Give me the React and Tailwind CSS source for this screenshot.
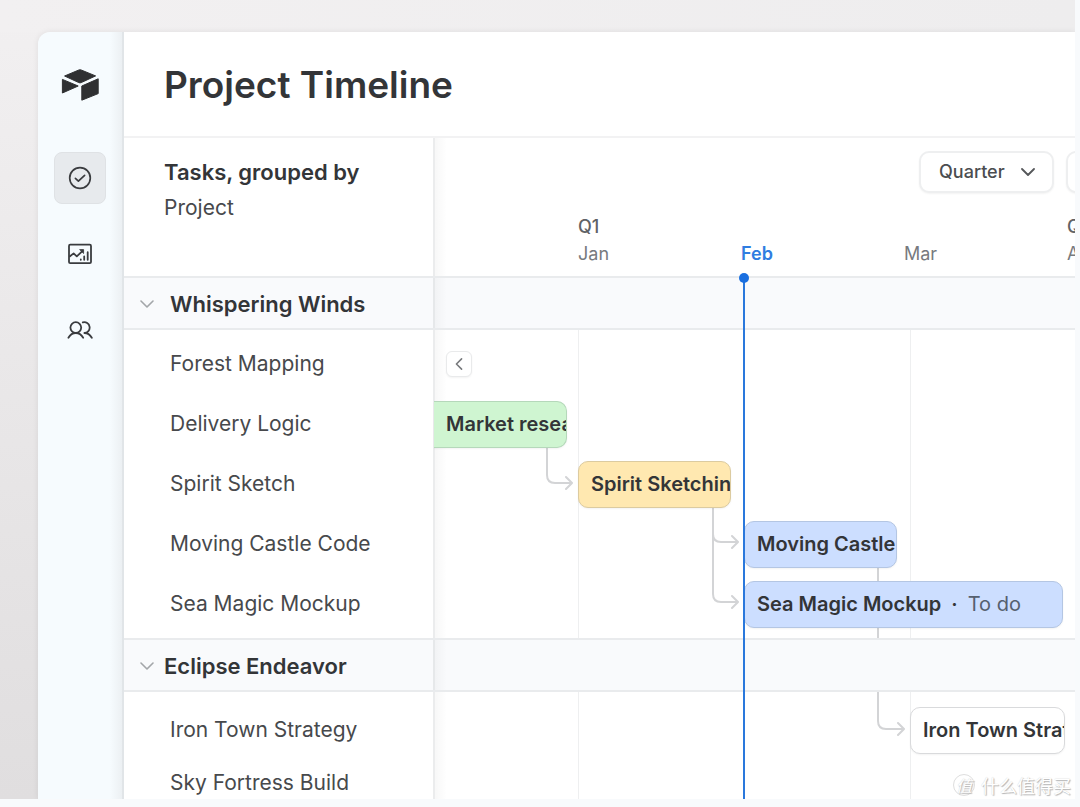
import React from "react";

const INK = "text-[#333538]";

function Logo() {
  return (
    <svg viewBox="0 0 38 32" className="h-8 w-[38px]" fill="#2f3032" stroke="#2f3032" strokeWidth="1" strokeLinejoin="round" aria-label="Home">
      <path d="M3.6 7 L17.8 1 Q19 0.6 20.2 1 L34.6 6.9 L20.2 13.6 Q19 14.1 17.8 13.6 Z" />
      <path d="M1.4 10.4 L17.2 17 L1.4 24 Z" />
      <path d="M20.8 17 L37.2 9.8 V24.6 L20.8 31.2 Z" />
    </svg>
  );
}

function CheckIcon() {
  return (
    <svg viewBox="0 0 24 24" className="size-6" fill="none" stroke="#3a3c3f" strokeWidth="1.7" strokeLinecap="round" strokeLinejoin="round">
      <circle cx="12" cy="12" r="10.3" />
      <path d="M7.4 12.4 L10.4 15.2 L16.6 9.3" />
    </svg>
  );
}

function ChartIcon() {
  return (
    <svg viewBox="0 0 26 22" className="h-[22px] w-[26px]" fill="none" stroke="#3a3c3f" strokeWidth="1.8" strokeLinecap="round" strokeLinejoin="round">
      <rect x="2" y="1.7" width="22" height="18.4" rx="1.2" />
      <path d="M3 13.2 L6.6 10.4 L9.8 13.4 L15.6 7.8" />
      <path d="M13 6.6 H16.6 V10.2 Z" fill="#3a3c3f" strokeWidth="0.8" />
      <path d="M13.8 16.4 V16.8 M17.2 13.4 V16.8 M20.7 9.2 V16.8" />
    </svg>
  );
}

function PeopleIcon() {
  return (
    <svg viewBox="0 0 26 20" className="h-5 w-[26px]" fill="none" stroke="#3a3c3f" strokeWidth="1.8" strokeLinecap="round" strokeLinejoin="round">
      <circle cx="8.8" cy="7.6" r="5.4" />
      <path d="M1.4 17.8 C3 15 5.6 13 8.8 13 S14.6 15 16.2 17.8" />
      <path d="M15.8 2.4 A5.4 5.4 0 1 1 17.4 13 C20.6 13 23.2 15 24.8 17.8" />
    </svg>
  );
}

function Chevron({ className }) {
  return (
    <svg viewBox="0 0 14 8" className={className} fill="none" stroke="currentColor" strokeLinecap="round" strokeLinejoin="round">
      <path d="M1 1 L7 7 L13 1" />
    </svg>
  );
}

function NavButton({ label, active, children }) {
  return (
    <button
      aria-label={label}
      className={`flex size-13 items-center justify-center rounded-lg border ${active ? "border-[#dfe2e5] bg-[#e7eaed]" : "border-transparent"}`}
    >
      {children}
    </button>
  );
}

function Shade() {
  return <div className="pointer-events-none absolute inset-y-0 left-0 w-3 bg-linear-to-r from-black/3 to-transparent" />;
}

function GroupHeader({ name, wide }) {
  return (
    <div className="flex h-[54px] border-y-2 border-[#e9ebed] bg-[#f9fafc]">
      <div className="flex w-[311px] shrink-0 items-center border-r-2 border-[#e6e8ea] pt-0.5 pl-4">
        <button className={`flex items-center text-[22px] font-semibold whitespace-nowrap ${wide ? "gap-4" : "gap-2.5"} ${INK}`}>
          <Chevron className="h-2 w-3.5 stroke-[1.6] text-[#a3a6a9]" />
          {name}
        </button>
      </div>
      <div className="relative flex-1">
        <Shade />
      </div>
    </div>
  );
}

function Bar({ place, title, status }) {
  return (
    <div className={`relative flex h-[47px] shrink-0 items-center overflow-hidden border pl-3 text-xl font-semibold whitespace-nowrap shadow-xs ${place} ${INK}`}>
      {title}
      {status && (
        <>
          <span className="px-2.5">·</span>
          <span className="font-normal text-[#55606f]">{status}</span>
        </>
      )}
    </div>
  );
}

function GridLines() {
  return (
    <>
      <div className="absolute inset-y-0 left-[143px] w-px bg-[#eeeff0]" />
      <div className="absolute inset-y-0 left-[475px] w-px bg-[#eeeff0]" />
    </>
  );
}

function Links({ d }) {
  return (
    <svg className="pointer-events-none absolute top-0 left-0 h-full w-[640px]" fill="none" stroke="#d3d4d6" strokeWidth="2" strokeLinecap="round" strokeLinejoin="round">
      <path d={d} />
    </svg>
  );
}

function TaskName({ children, className = "h-[60px]" }) {
  return <li className={`flex items-center pl-[46px] text-[21px] whitespace-nowrap text-[#47494c] ${className}`}>{children}</li>;
}

const months = [
  { q: "Q1", m: "Jan" },
  { q: "", m: "Feb", now: true },
  { q: "", m: "Mar" },
  { q: "Q2", m: "Apr" },
];

export default function App() {
  return (
    <div className="min-h-screen bg-[#f8fafc] pr-[5px] pb-2 font-['Inter',sans-serif]">
      <div className="relative overflow-hidden bg-linear-to-b from-[#f2f0f1] to-[#e0dedf] pt-8 pl-[38px]">
        <div className="absolute inset-x-0 top-0 h-8 bg-linear-to-r from-[#f2f0f1] to-[#eeedee]" />
        <div className="relative flex overflow-hidden rounded-tl-xl shadow-[0_0_6px_rgba(0,0,0,0.08)]">
          <nav className="relative flex w-[86px] shrink-0 flex-col items-center bg-[#f6fbfe] pt-[37px] pr-0.5">
            <Logo />
            <div className="mt-[51px] flex flex-col gap-6">
              <NavButton label="Tasks" active>
                <CheckIcon />
              </NavButton>
              <NavButton label="Reports">
                <ChartIcon />
              </NavButton>
              <NavButton label="People">
                <PeopleIcon />
              </NavButton>
            </div>
            <div className="pointer-events-none absolute inset-y-0 right-0 w-3.5 border-r-2 border-[#e1e5e8] bg-linear-to-l from-[#ecf0f3] to-transparent" />
          </nav>

          <main className="min-w-0 flex-1 overflow-hidden bg-white">
            <header className="flex h-[106px] items-center border-b-2 border-[#f2f2f3] pt-0.5 pl-10">
              <h1 className={`text-[37px] font-semibold whitespace-nowrap ${INK}`}>Project Timeline</h1>
            </header>

            <div className="relative">
              <div className="flex h-[138px]">
                <div className="w-[311px] shrink-0 border-r-2 border-[#ebeced] pt-4 pl-10">
                  <h2 className={`text-[22px] leading-9 font-semibold whitespace-nowrap ${INK}`}>Tasks, grouped by</h2>
                  <p className="text-[21px] leading-9 text-[#47494c]">Project</p>
                </div>
                <div className="relative min-w-0 flex-1 overflow-hidden">
                  <Shade />
                  <div className="flex gap-3 pt-[13px] pl-[484px]">
                    <label className="relative flex shrink-0 items-center">
                      <span className="sr-only">Time scale</span>
                      <select className="h-[42px] w-[135px] appearance-none rounded-[10px] border-2 border-[#eeeff0] bg-white pl-[18px] text-lg font-medium text-[#4b4d50] shadow-xs">
                        <option>Quarter</option>
                        <option>Month</option>
                      </select>
                      <Chevron className="pointer-events-none absolute right-[19px] h-2 w-3.5 stroke-[1.8] text-[#55575a]" />
                    </label>
                    <button aria-label="More options" className="h-[42px] w-12 shrink-0 rounded-[10px] border-2 border-[#eeeff0] bg-white shadow-xs" />
                  </div>
                  <div className="mt-5 flex pl-[143px] text-lg leading-[27px] text-[#777a7e]">
                    {months.map(({ q, m, now }) => (
                      <div key={m} className="w-[163px] shrink-0">
                        <div className="h-[27px] font-medium text-[#5f6266]">{q}</div>
                        <div className={now ? "font-semibold text-[#2f7de1]" : ""}>{m}</div>
                      </div>
                    ))}
                  </div>
                </div>
              </div>

              <GroupHeader name="Whispering Winds" wide />
              <div className="flex">
                <ul className="w-[311px] shrink-0 border-r-2 border-[#ebeced] py-1">
                  <TaskName>Forest Mapping</TaskName>
                  <TaskName>Delivery Logic</TaskName>
                  <TaskName>Spirit Sketch</TaskName>
                  <TaskName>Moving Castle Code</TaskName>
                  <TaskName>Sea Magic Mockup</TaskName>
                </ul>
                <div className="relative min-w-0 flex-1 py-1">
                  <Shade />
                  <GridLines />
                  <Links d="M112 110 V145 q0 8 8 8 H135 M131 147 l6 6 l-6 6 M278 170 V264 q0 8 8 8 H301 M297 266 l6 6 l-6 6 M278 204 q0 8 8 8 H301 M297 206 l6 6 l-6 6 M443 230 V308" />
                  <div className="flex h-[60px] items-center pl-[11px]">
                    <button aria-label="Scroll to earlier tasks" className="relative flex size-[26px] items-center justify-center rounded-md border border-[#e9eaeb] bg-white shadow-xs">
                      <svg viewBox="0 0 8 14" className="h-3 w-2" fill="none" stroke="#77797c" strokeWidth="1.8" strokeLinecap="round" strokeLinejoin="round">
                        <path d="M7 1 L1 7 L7 13" />
                      </svg>
                    </button>
                  </div>
                  <div className="flex h-[60px] items-center">
                    <Bar title="Market research" place="-ml-px w-[133px] rounded-r-[10px] border-l-0 border-[#b5d8ba] bg-[#cff5d1]" />
                  </div>
                  <div className="flex h-[60px] items-center">
                    <Bar title="Spirit Sketching" place="ml-[143px] w-[153px] rounded-[10px] border-[#dccba0] bg-[#ffe8b0]" />
                  </div>
                  <div className="flex h-[60px] items-center">
                    <Bar title="Moving Castle Code" place="ml-[309px] w-[153px] rounded-[10px] border-[#b4c6e3] bg-[#ccdeff]" />
                  </div>
                  <div className="flex h-[60px] items-center">
                    <Bar title="Sea Magic Mockup" status="To do" place="ml-[309px] w-[319px] rounded-[10px] border-[#b4c6e3] bg-[#ccdeff]" />
                  </div>
                </div>
              </div>

              <GroupHeader name="Eclipse Endeavor" />
              <div className="flex">
                <ul className="w-[311px] shrink-0 border-r-2 border-[#ebeced] pt-2">
                  <TaskName>Iron Town Strategy</TaskName>
                  <TaskName className="h-[39px] pt-1.5">Sky Fortress Build</TaskName>
                </ul>
                <div className="relative min-w-0 flex-1 pt-2">
                  <Shade />
                  <GridLines />
                  <Links d="M443 0 V29 q0 8 8 8 H467 M463 31 l6 6 l-6 6" />
                  <div className="flex h-[60px] items-center">
                    <Bar title="Iron Town Strategy" place="ml-[475px] w-[155px] rounded-[10px] border-[#d9dadc] bg-white" />
                  </div>
                  <div className="absolute right-1 bottom-0.5 flex items-center gap-1.5 font-['Noto_Sans_CJK_SC',sans-serif] text-white [text-shadow:1px_1px_1px_#b4b4b4,0_0_1px_#cccccc]">
                    <span className="flex size-[22px] items-center justify-center rounded-full border border-[#dedede] text-base italic">值</span>
                    <span className="text-lg leading-6">什么值得买</span>
                  </div>
                </div>
              </div>

              <div className="pointer-events-none absolute top-[139px] bottom-0 left-[619px] w-0.5 bg-[#2a78dc]" />
              <div className="pointer-events-none absolute top-[135px] left-[615px] size-2.5 rounded-full bg-[#1a6fe0]" />
            </div>
          </main>
        </div>
      </div>
    </div>
  );
}
